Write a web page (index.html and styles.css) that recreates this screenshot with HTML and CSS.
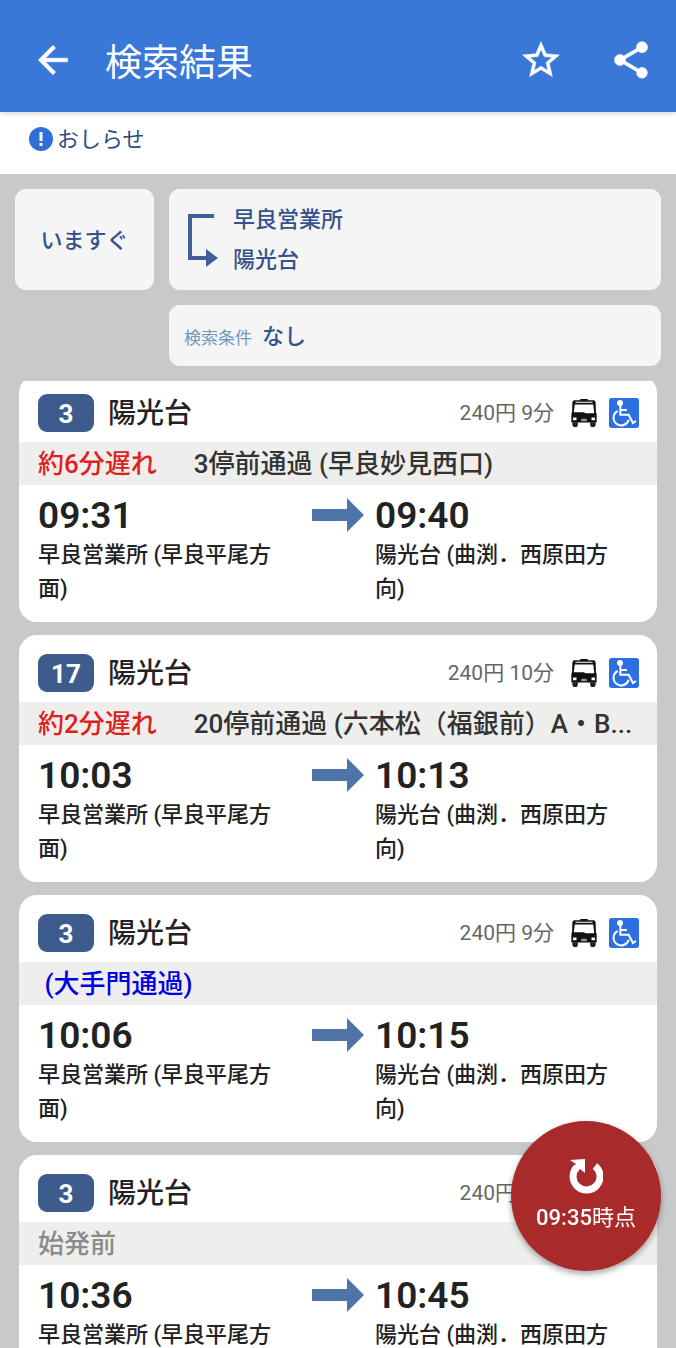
FILE: index.html
```html
<!DOCTYPE html>
<html lang="ja">
<head>
    <meta charset="UTF-8">
    <meta name="viewport" content="width=device-width, initial-scale=1.0">
    <title>検索結果</title>
    <link rel="stylesheet" href="styles.css">
</head>
<body>

<!-- 共通アイコン -->
<svg class="sprite" aria-hidden="true">
    <symbol id="bus" viewBox="0 0 74 82">
        <path d="M26 0h22v4h19l4 5 1 30 2 4v26H0V43l2-4 1-30 4-5h19z" fill="#111"/>
        <path d="M12 8h50v3H12zM10 16h54l3 26H42l-6-3H7z" fill="#fff"/>
        <path d="M5 54h10v8H5zM59 54h10v8H59z" fill="#fff"/>
        <path d="M29 58h16v7H29z" fill="#999"/>
        <path d="M3 68h16v8l-3 6H6l-3-6zM55 68h16v8l-3 6H58l-3-6z" fill="#222"/>
    </symbol>
    <symbol id="wheelchair" viewBox="0 0 90 90">
        <rect width="90" height="90" rx="8" fill="#2b6fe3"/>
        <circle cx="33" cy="15" r="9" fill="#fff"/>
        <path d="M34 20v30h25l13 25 9-6M34 36h20" fill="none" stroke="#fff" stroke-width="6"/>
        <path d="M26 39a23 23 0 1 0 33 26" fill="none" stroke="#fff" stroke-width="6"/>
    </symbol>
    <symbol id="arrow" viewBox="0 0 52 34">
        <path d="M0 11h35V0l17 17-17 17V23H0z" fill="#4f74a8"/>
    </symbol>
</svg>

<header class="app-bar">
    <button class="icon-button" type="button" aria-label="戻る">
        <svg viewBox="0 0 24 24"><path d="M20 11H7.83l5.59-5.59L12 4l-8 8 8 8 1.41-1.41L7.83 13H20v-2z"/></svg>
    </button>
    <h1>検索結果</h1>
    <button class="icon-button" type="button" aria-label="お気に入り">
        <svg viewBox="0 0 24 24"><path d="M22 9.24l-7.19-.62L12 2 9.19 8.63 2 9.24l5.46 4.73L5.82 21 12 17.27 18.18 21l-1.63-7.03L22 9.24zM12 15.4l-3.76 2.27 1-4.28-3.32-2.88 4.38-.38L12 6.1l1.71 4.04 4.38.38-3.32 2.88 1 4.28L12 15.4z"/></svg>
    </button>
    <button class="icon-button" type="button" aria-label="共有">
        <svg viewBox="0 0 24 24"><path d="M18 16.08c-.76 0-1.44.3-1.96.77L8.91 12.7c.05-.23.09-.46.09-.7s-.04-.47-.09-.7l7.05-4.11c.54.5 1.25.81 2.04.81 1.66 0 3-1.34 3-3s-1.34-3-3-3-3 1.34-3 3c0 .24.04.47.09.7L8.04 9.81C7.5 9.31 6.79 9 6 9c-1.66 0-3 1.34-3 3s1.34 3 3 3c.79 0 1.5-.31 2.04-.81l7.12 4.16c-.05.21-.08.43-.08.65 0 1.61 1.31 2.92 2.92 2.92s2.92-1.31 2.92-2.92-1.31-2.92-2.92-2.92z"/></svg>
    </button>
</header>

<div class="notice">
    <a href="#">
        <svg viewBox="0 0 24 24"><circle cx="12" cy="12" r="12" fill="#2f6fd6"/><path d="M12 5v9M12 16v3" stroke="#fff" stroke-width="3"/></svg>
        <span>おしらせ</span>
    </a>
</div>

<section class="search">
    <button class="box when" type="button">いますぐ</button>
    <button class="box route" type="button">
        <svg viewBox="0 0 30 52"><path d="M26 2H2v42h18" fill="none" stroke="#3f5f96" stroke-width="4"/><path d="M18 35l12 9-12 9z" fill="#3f5f96"/></svg>
        <span class="route-names">
            <span>早良営業所</span>
            <span>陽光台</span>
        </span>
    </button>
    <button class="box condition" type="button">
        <span class="condition-label">検索条件</span>
        <span class="condition-value">なし</span>
    </button>
</section>

<main class="results">
    <ul class="result-list">
        <li class="card">
            <div class="card-head">
                <span class="badge">3</span>
                <h2>陽光台</h2>
                <span class="fare">240円 9分</span>
                <svg class="bus-icon"><use href="#bus"/></svg>
                <svg class="wheelchair-icon"><use href="#wheelchair"/></svg>
            </div>
            <div class="status"><span class="delay">約6分遅れ</span><span class="passed">3停前通過 (早良妙見西口)</span></div>
            <div class="trip">
                <div class="stop">
                    <time>09:31</time>
                    <p>早良営業所 (早良平尾方面)</p>
                </div>
                <svg class="arrow-icon"><use href="#arrow"/></svg>
                <div class="stop">
                    <time>09:40</time>
                    <p>陽光台 (曲渕．西原田方向)</p>
                </div>
            </div>
        </li>
        <li class="card">
            <div class="card-head">
                <span class="badge">17</span>
                <h2>陽光台</h2>
                <span class="fare">240円 10分</span>
                <svg class="bus-icon"><use href="#bus"/></svg>
                <svg class="wheelchair-icon"><use href="#wheelchair"/></svg>
            </div>
            <div class="status"><span class="delay">約2分遅れ</span><span class="passed">20停前通過 (六本松（福銀前）A・B...</span></div>
            <div class="trip">
                <div class="stop">
                    <time>10:03</time>
                    <p>早良営業所 (早良平尾方面)</p>
                </div>
                <svg class="arrow-icon"><use href="#arrow"/></svg>
                <div class="stop">
                    <time>10:13</time>
                    <p>陽光台 (曲渕．西原田方向)</p>
                </div>
            </div>
        </li>
        <li class="card">
            <div class="card-head">
                <span class="badge">3</span>
                <h2>陽光台</h2>
                <span class="fare">240円 9分</span>
                <svg class="bus-icon"><use href="#bus"/></svg>
                <svg class="wheelchair-icon"><use href="#wheelchair"/></svg>
            </div>
            <div class="status"><span class="via">&nbsp;(大手門通過)</span></div>
            <div class="trip">
                <div class="stop">
                    <time>10:06</time>
                    <p>早良営業所 (早良平尾方面)</p>
                </div>
                <svg class="arrow-icon"><use href="#arrow"/></svg>
                <div class="stop">
                    <time>10:15</time>
                    <p>陽光台 (曲渕．西原田方向)</p>
                </div>
            </div>
        </li>
        <li class="card">
            <div class="card-head">
                <span class="badge">3</span>
                <h2>陽光台</h2>
                <span class="fare">240円 9分</span>
                <svg class="bus-icon"><use href="#bus"/></svg>
                <svg class="wheelchair-icon"><use href="#wheelchair"/></svg>
            </div>
            <div class="status"><span class="before">始発前</span></div>
            <div class="trip">
                <div class="stop">
                    <time>10:36</time>
                    <p>早良営業所 (早良平尾方面)</p>
                </div>
                <svg class="arrow-icon"><use href="#arrow"/></svg>
                <div class="stop">
                    <time>10:45</time>
                    <p>陽光台 (曲渕．西原田方向)</p>
                </div>
            </div>
        </li>
    </ul>
</main>

<button class="refresh" type="button">
    <svg viewBox="0 0 34 36"><path d="M26 8A13.500 13.500 0 1 1 8 9" fill="none" stroke="#fff" stroke-width="7"/><path d="M1 2l15-1v14l-5-4-4 3-3-4 3-4z" fill="#fff"/></svg>
    <span><b>09:35</b>時点</span>
</button>

</body>
</html>
```
FILE: styles.css
```css
* {
    box-sizing: border-box;
}

body {
    font-family: Roboto, "Noto Sans CJK JP", sans-serif;
    margin: 0;
    height: 100vh;
    display: flex;
    flex-direction: column;
    overflow: hidden;
    background-color: #c9c9cc;
    color: #222;
}

h1, h2, p, ul {
    margin: 0;
    padding: 0;
}

button {
    font-family: inherit;
    border: none;
    padding: 0;
    cursor: pointer;
}

.sprite {
    display: none;
}

.app-bar {
    display: flex;
    align-items: center;
    flex-shrink: 0;
    height: 112px;
    padding: 7px 23px 0 31px;
    background-color: #3a78d8;
    box-shadow: 0 1px 6px rgba(0, 0, 0, 0.2);
    z-index: 1;
}

.app-bar h1 {
    flex: 1;
    margin-left: 30px;
    color: white;
    font-size: 37px;
    font-weight: 400;
}

.icon-button {
    width: 44px;
    height: 44px;
    background: none;
}

.icon-button svg {
    display: block;
    width: 44px;
    height: 44px;
    fill: white;
    stroke: white;
    stroke-width: 0.3;
}

.icon-button + .icon-button {
    margin-left: 46px;
}

.notice {
    flex-shrink: 0;
    height: 62px;
    padding: 10px 29px;
    background-color: white;
}

.notice a {
    display: inline-flex;
    align-items: center;
    gap: 4px;
    color: #2f4d85;
    font-size: 22px;
    line-height: 32px;
    text-decoration: none;
}

.notice span {
    padding-top: 2px;
}

.notice svg {
    width: 24px;
    height: 24px;
}

.search {
    display: grid;
    grid-template-columns: 139px 1fr;
    gap: 15px;
    flex-shrink: 0;
    padding: 15px;
}

.box {
    display: flex;
    align-items: center;
    border-radius: 11px;
    background-color: #f5f5f5;
    color: #34528b;
    font-size: 22px;
    font-weight: 500;
}

.when {
    justify-content: center;
    padding-bottom: 4px;
}

.route {
    height: 101px;
    padding-left: 19px;
    gap: 15px;
}

.route svg {
    width: 30px;
    height: 54px;
}

.route-names {
    display: flex;
    flex-direction: column;
    line-height: 40px;
    text-align: left;
}

.condition {
    grid-column: 2;
    height: 61px;
    padding-left: 15px;
    gap: 10px;
}

.condition-label {
    padding-top: 2px;
    color: #6f97c0;
    font-size: 17px;
    font-weight: 400;
}

.condition-value {
    padding-bottom: 4px;
}

.results {
    flex: 1;
    min-height: 0;
    overflow: hidden;
}

.result-list {
    margin: -6px 19px 0;
    list-style: none;
}

.card {
    margin-bottom: 13px;
    border-radius: 18px;
    background-color: white;
    overflow: hidden;
}

.card-head {
    display: flex;
    align-items: center;
    height: 67px;
    padding: 9px 18px 0 19px;
}

.badge {
    width: 56px;
    height: 38px;
    border-radius: 9px;
    background-color: #3e5b8e;
    color: white;
    font-size: 26px;
    font-weight: 700;
    line-height: 40px;
    text-align: center;
}

.card-head h2 {
    flex: 1;
    margin-left: 14px;
    padding-top: 2px;
    font-size: 28px;
    font-weight: 500;
    line-height: 38px;
}

.fare {
    color: #666;
    font-size: 21px;
    line-height: 28px;
}

.bus-icon {
    width: 26px;
    height: 28px;
    margin: 0 12px 0 17px;
}

.wheelchair-icon {
    width: 30px;
    height: 30px;
}

.status {
    height: 43px;
    padding: 0 19px;
    background-color: #eeeeed;
    font-size: 26px;
    font-weight: 500;
    line-height: 45px;
    white-space: nowrap;
    overflow: hidden;
    text-overflow: ellipsis;
}

.delay {
    margin-right: 37px;
    color: #e0201b;
}

.passed {
    color: #333;
}

.via {
    color: #0000e6;
}

.before {
    color: #8a8a8a;
}

.trip {
    display: grid;
    grid-template-columns: 1fr 52px 1fr;
    gap: 11px;
    padding: 9px 19px 16px;
}

.stop time {
    display: block;
    font-size: 37px;
    font-weight: 600;
    line-height: 44px;
}

.stop p {
    padding-right: 10px;
    font-size: 22px;
    font-weight: 500;
    line-height: 34px;
}

.arrow-icon {
    width: 52px;
    height: 34px;
    margin-top: 4px;
}

.refresh {
    position: fixed;
    right: 15px;
    bottom: 77px;
    display: flex;
    flex-direction: column;
    align-items: center;
    justify-content: center;
    width: 150px;
    height: 150px;
    border-radius: 50%;
    background-color: #a92a2a;
    box-shadow: 0 3px 6px rgba(0, 0, 0, 0.35);
    color: white;
    font-size: 22px;
    line-height: 32px;
}

.refresh b {
    font-weight: 500;
}

.refresh svg {
    width: 34px;
    height: 36px;
    margin-bottom: 8px;
}
```
